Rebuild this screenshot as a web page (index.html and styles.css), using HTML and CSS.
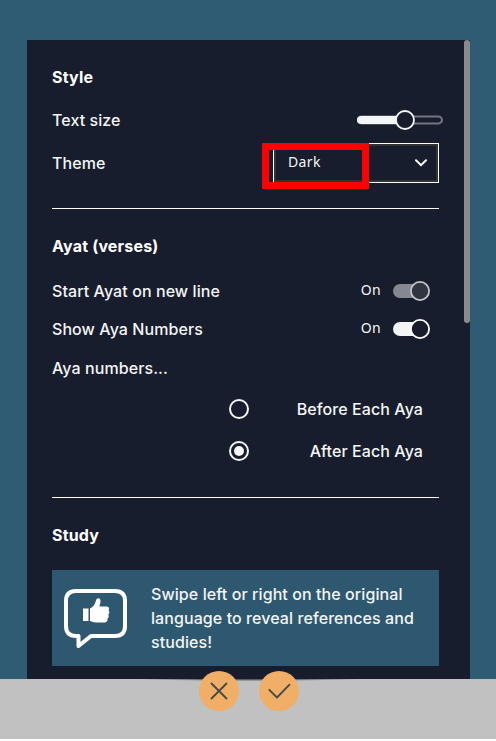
FILE: index.html
```html
<!DOCTYPE html>
<html lang="en">
<head>
<meta charset="utf-8">
<title>Settings</title>
<link rel="stylesheet" href="styles.css">
</head>
<body>
<main class="stage">
  <div class="panel">
    <section class="section">
      <h2 class="title">Style</h2>
      <div class="row row-size">
        <span>Text size</span>
        <svg class="slider" width="88" height="22" viewBox="0 0 88 22">
          <rect x="2" y="7.6" width="84" height="6.8" rx="3.4" fill="none" stroke="#747681" stroke-width="2"/>
          <rect x="1" y="7" width="50" height="8" rx="4" fill="#f4f5f6"/>
          <circle cx="49" cy="11" r="9" fill="#171d2c" stroke="#f4f5f6" stroke-width="1.8"/>
        </svg>
      </div>
      <div class="row row-theme">
        <span>Theme</span>
        <div class="select">
          <span class="value">Dark</span>
          <svg width="12" height="8" viewBox="0 0 12 8"><path d="M1 1.2 6 6.2 11 1.2" fill="none" stroke="#fff" stroke-width="2" stroke-linecap="round"/></svg>
          <div class="highlight"></div>
        </div>
      </div>
    </section>
    <section class="section ayat">
      <h2 class="title">Ayat (verses)</h2>
      <div class="row row-switch">
        <span>Start Ayat on new line</span>
        <div class="switch">
          <span class="state">On</span>
          <svg width="38" height="22" viewBox="0 0 38 22"><rect x="1" y="4" width="36" height="14" rx="7" fill="#868891"/><circle cx="28" cy="11" r="9.1" fill="#303542" stroke="#c4c5c8" stroke-width="1.8"/></svg>
        </div>
      </div>
      <div class="row row-switch">
        <span>Show Aya Numbers</span>
        <div class="switch">
          <span class="state">On</span>
          <svg width="38" height="22" viewBox="0 0 38 22"><rect x="1" y="4" width="36" height="14" rx="7" fill="#f4f5f6"/><circle cx="28" cy="11" r="9.1" fill="#171d2c" stroke="#fff" stroke-width="1.8"/></svg>
        </div>
      </div>
      <div class="row row-label">Aya numbers...</div>
      <div class="row option"><span class="radio"></span><span>Before Each Aya</span></div>
      <div class="row option"><span class="radio checked"></span><span>After Each Aya</span></div>
    </section>
    <section class="section study">
      <h2 class="title">Study</h2>
      <div class="tip">
        <svg class="bubble" width="64" height="60" viewBox="0 0 64 60">
          <path d="M12 2H51Q61 2 61 12V37Q61 47 51 47H27L14.5 57V47H12Q2 47 2 37V12Q2 2 12 2Z" fill="none" stroke="#fff" stroke-width="4" stroke-linejoin="round"/>
          <path d="M19 19.5H24.5V32H19ZM26 19.5C29 18 31 15.500 32 11.500C32.600 8.500 36.500 8.300 36.500 12C36.500 14.500 35.500 16 35.500 17.500H42.500C45.500 17.500 45.500 20.500 44.500 21.500C46 22.800 45.500 25 44.200 25.500C45.300 27.200 44.500 29 43.500 29.500C44 32 42.500 33.500 40.500 33.500H32C29 33.500 28.500 32.500 26 32Z" fill="#fff"/>
        </svg>
        <p>Swipe left or right on the original language to reveal references and studies!</p>
      </div>
    </section>
    <div class="scrollbar"></div>
  </div>
</main>
<footer class="footer">
  <button class="action" aria-label="Cancel"><svg width="40" height="40" viewBox="0 0 40 40"><path d="M12.500 12.500 27.500 27.500M27.500 12.500 12.500 27.500" /></svg></button>
  <button class="action" aria-label="Confirm"><svg width="40" height="40" viewBox="0 0 40 40"><path d="M10.300 18.800 18 26.500 30.500 13.600"/></svg></button>
</footer>
</body>
</html>
```
FILE: styles.css
```css
* { box-sizing: border-box; }
body {
  margin: 0;
  height: 741px;
  overflow: hidden;
  background: #fff;
  color: #f4f5f6;
  font: 450 16px/24px Inter, "Liberation Sans", sans-serif;
  letter-spacing: 0.08px;
}
svg { display: block; flex: none; }
.stage {
  height: 679px;
  padding: 40px 26px 0 27px;
  background: #2f5c72;
}
.panel {
  position: relative;
  height: 639px;
  padding: 16px 31px 0 25px;
  background: #171d2c;
}
.scrollbar {
  position: absolute;
  top: 0;
  right: 0;
  width: 6px;
  height: 283px;
  border-radius: 3px;
  background: #8b8b8b;
}
.title {
  margin: 0;
  font-size: 16px;
  font-weight: 700;
  letter-spacing: 0.18px;
  line-height: 42px;
  color: #fff;
}
.row {
  display: flex;
  align-items: center;
  justify-content: space-between;
}
.row-size { height: 44px; }
.slider { margin-right: -5px; }
.row-theme { height: 42px; }
.select {
  position: relative;
  display: flex;
  align-items: center;
  justify-content: space-between;
  width: 166px;
  height: 40px;
  padding: 0 11px 0 12px;
  border: 1px solid #fff;
  box-shadow: inset 0 0 0 2px #333;
}
.value, .state {
  font-family: "Noto Sans", sans-serif;
  font-size: 14px;
  letter-spacing: 0.35px;
}
.value { margin: -3px 0 0 2px; }
.highlight {
  position: absolute;
  left: -12px;
  top: -1px;
  width: 107px;
  height: 46px;
  border: 7px solid #f00;
}
.ayat {
  margin-top: 24px;
  padding-top: 16px;
  border-top: 1px solid #fff;
}
.ayat .title { margin-bottom: 5px; }
.row-switch { height: 38px; padding-right: 9px; }
.switch { display: flex; align-items: center; gap: 11px; }
.state { margin-top: -2px; }
.row-label { height: 40px; }
.option { height: 42px; padding: 0 16px 0 177px; }
.radio {
  display: grid;
  place-items: center;
  width: 20px;
  height: 20px;
  border: 2px solid #f4f5f6;
  border-radius: 50%;
}
.checked::before {
  content: "";
  width: 10px;
  height: 10px;
  border-radius: 50%;
  background: #f4f5f6;
}
.study {
  margin-top: 25px;
  padding-top: 16px;
  border-top: 1px solid #fff;
}
.tip {
  display: flex;
  height: 96px;
  margin-top: 14px;
  padding: 12px 20px 12px 12px;
  gap: 23px;
  background: #2e586f;
}
.bubble { margin-top: 7px; }
.tip p { margin: 0; }
.footer {
  position: relative;
  display: flex;
  justify-content: center;
  gap: 20px;
  height: 60px;
  padding-right: 1px;
  margin-left: 2px;
  box-shadow: -2px 0 #c1c1c1;
  background: radial-gradient(ellipse 112px 2px at 247px 0, #4a4e5a 0, #6b6e76 50%, #c1c1c1 100%) #c1c1c1;
}
.action {
  width: 40px;
  height: 40px;
  margin-top: -8px;
  padding: 0;
  border: 0;
  border-radius: 50%;
  background: #f0ae66;
}
.action path {
  fill: none;
  stroke: #484848;
  stroke-width: 1.8;
  stroke-linecap: round;
  stroke-linejoin: round;
}
```
